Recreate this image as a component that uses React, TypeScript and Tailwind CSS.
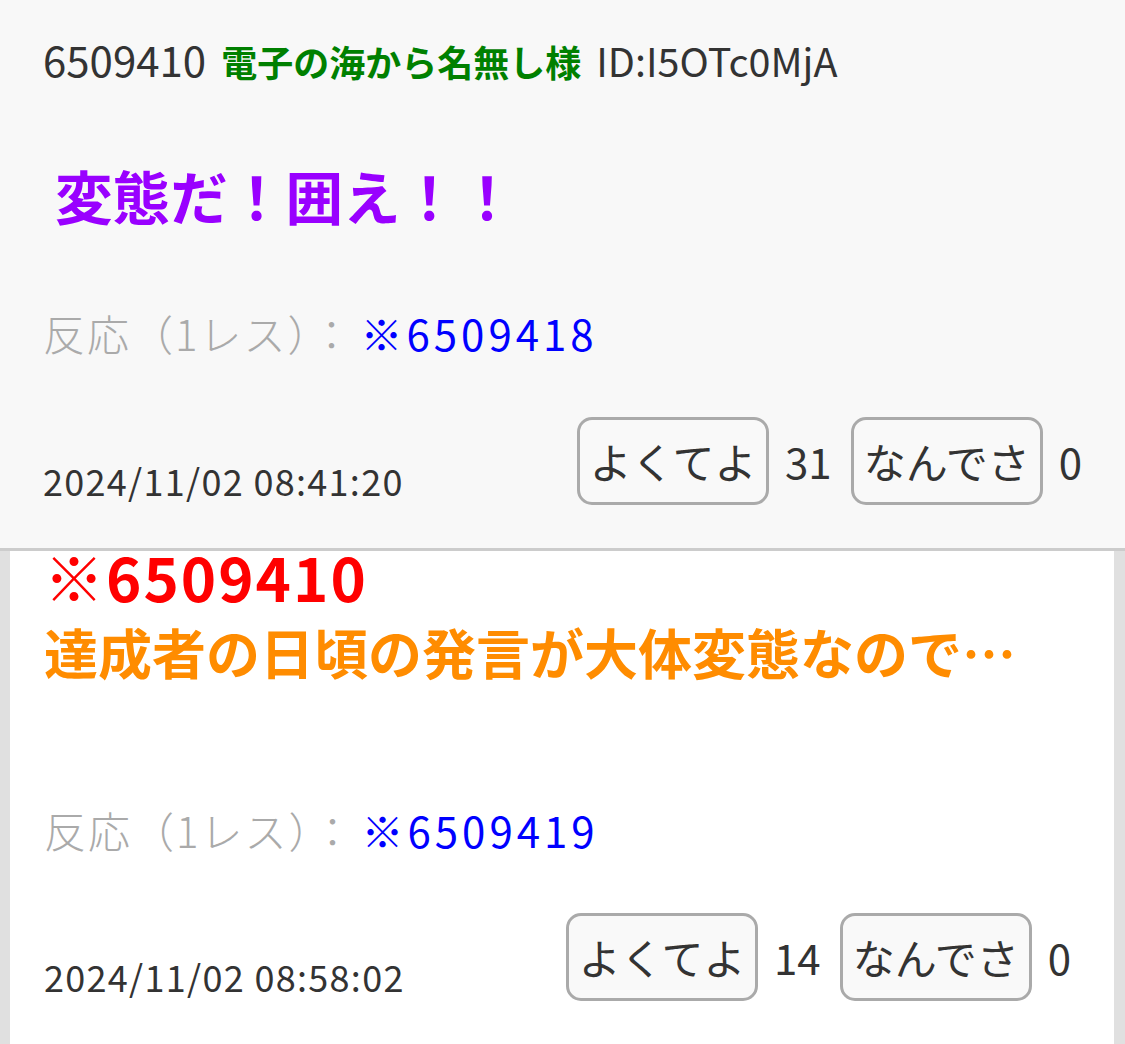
const font = "font-['Noto_Sans_CJK_JP','Noto_Sans',sans-serif]";

type VoteProps = { good: number; bad: number };

const Votes = ({ good, bad }: VoteProps) => {
  return (
    <div className="flex items-center text-[42px] leading-none text-[#333]">
      <button className="w-[192px] h-[88px] flex items-center justify-center border-[3px] border-[#aaa] rounded-[15px] bg-[#f9f9f9]">
        よくてよ
      </button>
      <span className="ml-[16px] mr-[19px]">{good}</span>
      <button className="w-[192px] h-[88px] flex items-center justify-center border-[3px] border-[#aaa] rounded-[15px] bg-[#f9f9f9]">
        なんでさ
      </button>
      <span className="ml-[16px]">{bad}</span>
    </div>
  );
};

const Reaction = ({ to }: { to: string }) => {
  return (
    <div className="text-[42px] leading-[60px] whitespace-nowrap">
      <span className="text-[#aaa] font-light tracking-[2px]">反応（1レス）：</span>
      <span className="ml-[6px] text-[#0000ff] tracking-[4px]">※{to}</span>
    </div>
  );
};

const App = () => {
  return (
    <div className={`w-[1125px] min-h-[1044px] bg-[#e0e0e0] text-[#333] ${font}`}>
      {/* first post */}
      <div className="bg-[#f8f8f8] border-b-[3px] border-[#ccc] px-[43px] pt-[33px] pb-[43px]">
        <div className="flex items-baseline text-[36px] leading-[52px] whitespace-nowrap">
          <span className="text-[42px]">6509410</span>
          <span className="ml-[15px] font-bold text-[#008000]">電子の海から名無し様</span>
          <span className="ml-[15px] text-[39.5px]">ID:I5OTc0MjA</span>
        </div>
        <div className="mt-[73px] ml-[12px] text-[57.6px] leading-[70px] font-bold text-[#9900ff]">
          変態だ！囲え！！
        </div>
        <div className="mt-[73px]">
          <Reaction to="6509418" />
        </div>
        <div className="mt-[54px] flex items-end justify-between">
          <div className="text-[36px] leading-[50px] tracking-[1.3px]">2024/11/02 08:41:20</div>
          <Votes good={31} bad={0} />
        </div>
      </div>

      {/* second post */}
      <div className="ml-[10px] mr-[11px] bg-white pl-[34px] pr-[43px] pb-[60px]">
        <div className="text-[60px] leading-[50px] font-bold text-[#ff0000] tracking-[2px]">※6509410</div>
        <div className="mt-[15px] text-[54px] leading-[72px] font-bold text-[#ff8c00] whitespace-nowrap">
          達成者の日頃の発言が大体変態なので…
        </div>
        <div className="mt-[112px]">
          <Reaction to="6509419" />
        </div>
        <div className="mt-[53px] flex items-end justify-between">
          <div className="text-[36px] leading-[50px] tracking-[1.3px]">2024/11/02 08:58:02</div>
          <Votes good={14} bad={0} />
        </div>
      </div>
    </div>
  );
};

export default App;
